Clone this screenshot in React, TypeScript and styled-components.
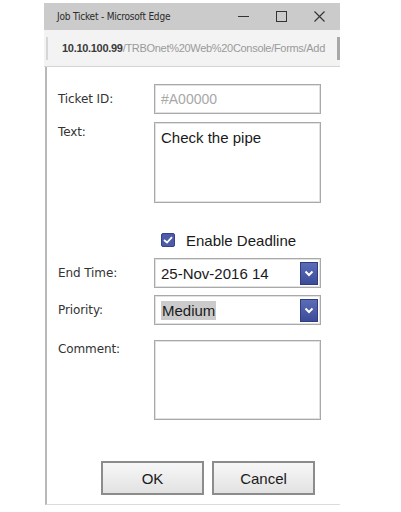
import styled, { createGlobalStyle } from 'styled-components';

const GlobalStyle = createGlobalStyle`
  html, body {
    margin: 0;
    padding: 0;
    background: #ffffff;
  }
  body {
    font-family: "Liberation Sans", Arial, sans-serif;
    color: #222;
  }
`;

const Page = styled.div`
  width: 401px;
  height: 512px;
  padding: 3px 0 0 44px;
  box-sizing: border-box;
  overflow: hidden;
`;

const Window = styled.div`
  width: 296px;
  display: flex;
  flex-direction: column;
`;

const TitleBar = styled.div`
  height: 27px;
  background: #cbcbcb;
  display: flex;
  align-items: center;
  padding: 0 2px 0 13px;
  font-family: "DejaVu Sans Condensed", "DejaVu Sans", sans-serif;
  font-size: 10px;
  color: #2a2a2a;
`;

const TitleText = styled.span`
  flex: 1;
  letter-spacing: -0.2px;
`;

const CaptionButton = styled.span`
  width: 38px;
  height: 27px;
  display: flex;
  align-items: center;
  justify-content: center;
`;

const AddressBar = styled.div`
  height: 36px;
  background: #f3f3f3;
  border-bottom: 1px solid #d4d4d4;
  display: flex;
  align-items: center;
  padding-left: 2px;
  font-size: 11px;
  letter-spacing: -0.3px;
`;

const AddressEdge = styled.span<{ $right?: boolean }>`
  width: ${(p) => (p.$right ? '3px' : '2px')};
  height: 23px;
  background: ${(p) => (p.$right ? '#a8a8a8' : '#d6d6d6')};
  flex-shrink: 0;
`;

const Url = styled.span`
  flex: 1;
  padding-left: 14px;
  white-space: nowrap;
  overflow: hidden;
  color: #9a9a9a;
`;

const Host = styled.span`
  color: #3a3a3a;
  font-weight: bold;
`;

const Body = styled.div`
  border-left: 2px solid #b9b9b9;
  border-bottom: 1px solid #dcdcdc;
  padding: 17px 0 9px 11px;
  height: 438px;
  box-sizing: border-box;
  display: flex;
  flex-direction: column;
  margin-left: 1px;
`;

const Form = styled.div`
  display: grid;
  grid-template-columns: 96px 167px;
  align-items: start;
`;

const Label = styled.div<{ $h?: number; $top?: number }>`
  font-family: "DejaVu Sans", sans-serif;
  font-size: 12px;
  letter-spacing: -0.1px;
  color: #333;
  height: ${(p) => (p.$h ? `${p.$h}px` : 'auto')};
  line-height: ${(p) => (p.$h ? `${p.$h}px` : '16px')};
  padding-top: ${(p) => p.$top ?? 0}px;
`;

const Field = styled.div<{ $h: number; $gap?: number }>`
  height: ${(p) => p.$h}px;
  margin-bottom: ${(p) => p.$gap ?? 0}px;
  border: 1px solid #a9a9a9;
  box-shadow: inset 0 0 0 1px #e2e2e2;
  box-sizing: border-box;
  background: #fff;
  display: flex;
  align-items: flex-start;
  padding: 6px 6px;
  font-size: 15px;
  color: #1a1a1a;
`;

const Placeholder = styled.span`
  color: #a8a8a8;
  font-size: 14px;
  line-height: 17px;
`;

const SelectBox = styled(Field)`
  align-items: center;
  justify-content: space-between;
  padding: 3px 2px 3px 6px;
`;

const Highlight = styled.span`
  background: #cbcbcb;
  padding: 1px 1px;
`;

const DropButton = styled.span`
  width: 18px;
  height: 23px;
  background: linear-gradient(#5a6cb8, #3c4c98);
  border: 1px solid #2f3d80;
  box-sizing: border-box;
  display: flex;
  align-items: center;
  justify-content: center;
`;

const CheckRow = styled.label`
  grid-column: 2;
  display: flex;
  align-items: center;
  gap: 11px;
  padding-left: 7px;
  height: 22px;
  margin: 26px 0 7px;
  font-size: 15px;
  color: #1a1a1a;
`;

const CheckBox = styled.span`
  width: 14px;
  height: 14px;
  border-radius: 2px;
  background: #4c5cab;
  border: 1px solid #34438a;
  box-sizing: border-box;
  display: flex;
  align-items: center;
  justify-content: center;
`;

const Buttons = styled.div`
  margin-top: auto;
  display: flex;
  gap: 8px;
  padding-left: 43px;
`;

const Button = styled.button`
  width: 103px;
  height: 34px;
  border: 2px solid #8c8c8c;
  background: linear-gradient(#f7f7f7, #e2e2e2);
  font-family: "Liberation Sans", Arial, sans-serif;
  font-size: 15px;
  color: #1a1a1a;
  padding: 0;
`;

const Chevron = () => (
  <svg width="10" height="7" viewBox="0 0 10 7">
    <path d="M1.5 1.5 L5 5 L8.5 1.5" stroke="#fff" strokeWidth="2" fill="none" />
  </svg>
);

export default function App() {
  return (
    <Page>
      <GlobalStyle />
      <Window>
        <TitleBar>
          <TitleText>Job Ticket - Microsoft Edge</TitleText>
          <CaptionButton>
            <svg width="11" height="11" viewBox="0 0 11 11">
              <path d="M0 5.5 H11" stroke="#333" strokeWidth="1" />
            </svg>
          </CaptionButton>
          <CaptionButton>
            <svg width="11" height="11" viewBox="0 0 11 11">
              <rect x="0.5" y="0.5" width="10" height="10" stroke="#333" strokeWidth="1" fill="none" />
            </svg>
          </CaptionButton>
          <CaptionButton>
            <svg width="11" height="11" viewBox="0 0 11 11">
              <path d="M0.5 0.5 L10.5 10.5 M10.5 0.5 L0.5 10.5" stroke="#333" strokeWidth="1.1" />
            </svg>
          </CaptionButton>
        </TitleBar>
        <AddressBar>
          <AddressEdge />
          <Url>
            <Host>10.10.100.99</Host>/TRBOnet%20Web%20Console/Forms/Add
          </Url>
          <AddressEdge $right />
        </AddressBar>
        <Body>
          <Form>
            <Label $h={30}>Ticket ID:</Label>
            <Field $h={30} $gap={8}>
              <Placeholder>#A00000</Placeholder>
            </Field>
            <Label $top={2}>Text:</Label>
            <Field $h={81}>Check the pipe</Field>
            <CheckRow>
              <CheckBox>
                <svg width="10" height="8" viewBox="0 0 10 8">
                  <path d="M1 4 L4 6.5 L9 1.2" stroke="#fff" strokeWidth="1.8" fill="none" />
                </svg>
              </CheckBox>
              Enable Deadline
            </CheckRow>
            <Label $h={30}>End Time:</Label>
            <SelectBox $h={30} $gap={7}>
              <span>25-Nov-2016 14</span>
              <DropButton>
                <Chevron />
              </DropButton>
            </SelectBox>
            <Label $h={30}>Priority:</Label>
            <SelectBox $h={30} $gap={15}>
              <Highlight>Medium</Highlight>
              <DropButton>
                <Chevron />
              </DropButton>
            </SelectBox>
            <Label $top={1}>Comment:</Label>
            <Field $h={80} />
          </Form>
          <Buttons>
            <Button>OK</Button>
            <Button>Cancel</Button>
          </Buttons>
        </Body>
      </Window>
    </Page>
  );
}
